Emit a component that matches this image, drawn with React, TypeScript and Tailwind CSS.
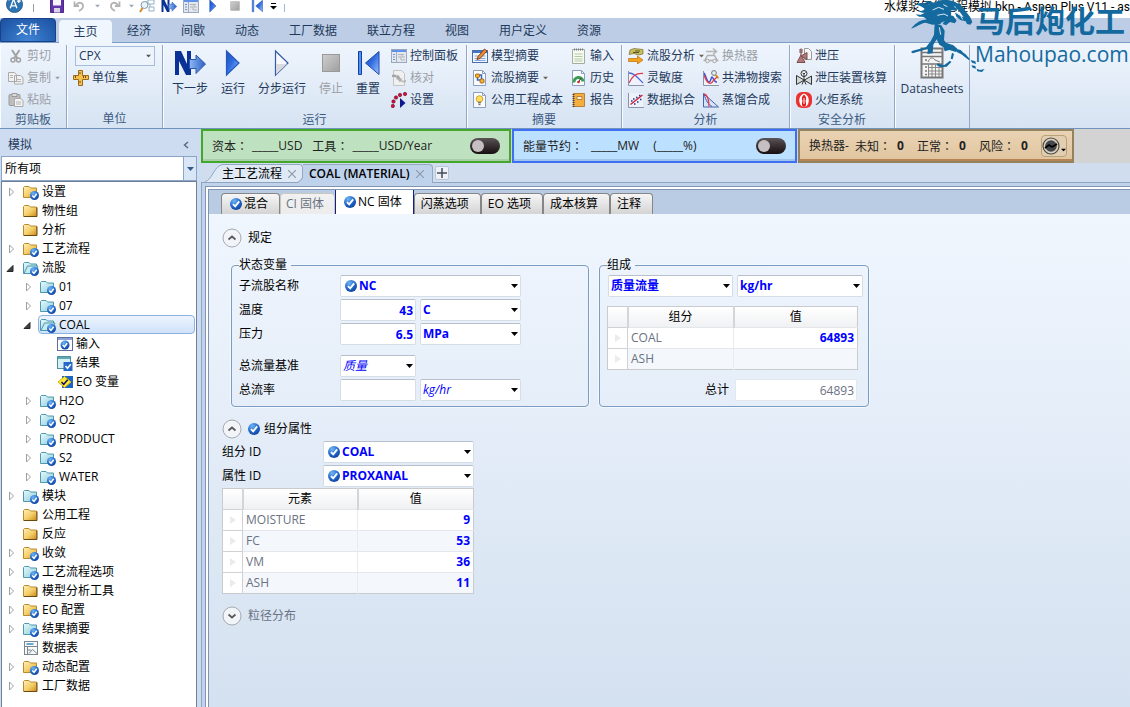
import { ReactNode, SVGProps, useState } from "react";
import { clsx } from "clsx";

type IconProps = SVGProps<SVGSVGElement>;

function Svg({ children, className = "size-4", viewBox = "0 0 16 16", ...props }: IconProps) {
  return (
    <svg viewBox={viewBox} className={clsx("shrink-0", className)} fill="none" aria-hidden="true" {...props}>
      {children}
    </svg>
  );
}

/* ---------- shared icons ---------- */

function Gradients() {
  return (
    <svg className="absolute size-0" aria-hidden="true">
      <defs>
        <linearGradient id="blue" x1="0" y1="0" x2="1" y2="1">
          <stop offset="0" stopColor="#1f52b8" />
          <stop offset="0.45" stopColor="#2f6be0" />
          <stop offset="1" stopColor="#9cc4ff" />
        </linearGradient>
        <linearGradient id="arrow" x1="0" y1="0" x2="1" y2="0">
          <stop offset="0" stopColor="#8db8f5" />
          <stop offset="1" stopColor="#2c5fc4" />
        </linearGradient>
        <linearGradient id="gold" x1="0" y1="0" x2="1" y2="1">
          <stop offset="0" stopColor="#fff0b8" />
          <stop offset="0.55" stopColor="#f4cd66" />
          <stop offset="1" stopColor="#c98a1c" />
        </linearGradient>
        <linearGradient id="teal" x1="0" y1="0" x2="1" y2="1">
          <stop offset="0" stopColor="#e4fafd" />
          <stop offset="1" stopColor="#8fcbd8" />
        </linearGradient>
        <radialGradient id="ball" cx="0.35" cy="0.25" r="0.9">
          <stop offset="0" stopColor="#6db4f5" />
          <stop offset="0.6" stopColor="#1c5fc2" />
          <stop offset="1" stopColor="#0b3a8c" />
        </radialGradient>
        <linearGradient id="gray" x1="0" y1="0" x2="1" y2="1">
          <stop offset="0" stopColor="#cfcfcf" />
          <stop offset="1" stopColor="#9f9f9f" />
        </linearGradient>
      </defs>
    </svg>
  );
}

function CheckBall({ className = "size-3" }: { className?: string }) {
  return (
    <Svg viewBox="0 0 12 12" className={className}>
      <circle cx="6" cy="6" r="6" fill="url(#ball)" />
      <path d="M3 6.2 5.2 8.4 9.2 3.4" stroke="#fff" strokeWidth="1.8" />
    </Svg>
  );
}

function Caret({ className = "" }: { className?: string }) {
  return (
    <Svg viewBox="0 0 7 4" className={clsx("h-1 w-[7px]", className)}>
      <path d="M0 0h7L3.500 4Z" fill="currentColor" />
    </Svg>
  );
}

type FolderKind = "gold" | "goldCheck" | "teal" | "tealOpen";

function Folder({ kind }: { kind: FolderKind }) {
  const gold = kind === "gold" || kind === "goldCheck";
  const stroke = gold ? "#b98b2e" : "#4f98ad";
  return (
    <Svg>
      <path d="M.5 13.500v-10l1-1H6l1.500 1.500h6v9.500Z" fill={gold ? "url(#gold)" : "url(#teal)"} stroke={stroke} />
      {kind === "gold" && <path d="M1 13.500h13V4.500" stroke="#6b4a10" />}
      {kind === "tealOpen" && <path d="M1 13.500 4.500 6H15l-3 7.500Z" fill="#c6ecf3" stroke={stroke} />}
      {kind !== "gold" && (
        <>
          <circle cx="11.500" cy="11.500" r="4.500" fill="url(#ball)" />
          <path d="m9.300 11.600 1.700 1.800 2.700-3.600" stroke="#fff" strokeWidth="1.500" />
        </>
      )}
    </Svg>
  );
}

function InputFormIcon() {
  return (
    <Svg>
      <rect x=".5" y="1.500" width="15" height="13" fill="#fff" stroke="#5a6ea0" />
      <path d="M1 2h14v2H1z" fill="#8aa0d8" />
      <circle cx="8" cy="9" r="4.500" fill="url(#ball)" />
      <path d="m5.800 9 1.700 1.800 2.700-3.600" stroke="#fff" strokeWidth="1.500" />
    </Svg>
  );
}

function ResultFormIcon() {
  return (
    <Svg>
      <rect x=".5" y="1.500" width="13" height="12" fill="#d8f0f3" stroke="#4f8f9c" />
      <path d="M1 2h12v2H1z" fill="#5fa9b5" />
      <rect x="6.500" y="7" width="9" height="9" fill="#2767c9" />
      <path d="m8.500 11 2 2.300 3.300-4" stroke="#fff" strokeWidth="1.500" />
    </Svg>
  );
}

function EoIcon() {
  return (
    <Svg>
      <rect x="5" y="2" width="11" height="12" fill="#1c63c8" />
      <path d="m1 8 6.500-5.500L14 8l-6.500 5.500Z" fill="#ffea3a" stroke="#d8b400" />
      <path d="m4.500 8 2.200 2.300 4-4.600" stroke="#101060" strokeWidth="1.500" />
    </Svg>
  );
}

function DatasheetIcon() {
  return (
    <Svg>
      <rect x="1.500" y="1.500" width="13" height="13" fill="#f7f8f8" stroke="#7b8790" />
      <path d="M3.500 4h7" stroke="#3a8fc0" strokeWidth="1.500" />
      <path d="M2 6.500h12M4.500 6.500V14M5 10h3M6 13.500l3.500-4 4.500 4" stroke="#7b8790" />
    </Svg>
  );
}

/* ---------- ribbon icons ---------- */

function NextIcon({ className = "h-8 w-8" }: { className?: string }) {
  return (
    <Svg viewBox="0 0 32 32" className={className}>
      <path d="M1 4h6l6 13V4h4v24h-5L5 14v14H1Z" fill="#0a3296" />
      <path d="M15.500 12.500H22V8l9.500 9-9.500 9.500v-5h-6.500Z" fill="url(#arrow)" stroke="#2a56ad" />
    </Svg>
  );
}

function PlayIcon({ className = "-mx-1 size-8", hollow = false }: { className?: string; hollow?: boolean }) {
  return (
    <Svg viewBox="0 0 32 32" className={className}>
      <path
        d="M9.500 4 22 16 9.500 28Z"
        fill={hollow ? "#f6f8fc" : "url(#blue)"}
        stroke={hollow ? "#3158ad" : "#2458bc"}
        strokeWidth="1.200"
      />
      {hollow && <path d="M10 17h11L10 27.500Z" fill="#d8dade" />}
    </Svg>
  );
}

function StopIcon({ className = "-mx-1 size-8" }: { className?: string }) {
  return (
    <Svg viewBox="0 0 32 32" className={className}>
      <rect x="7.500" y="7.500" width="17" height="17" fill="url(#gray)" stroke="#999" />
    </Svg>
  );
}

function RewindIcon({ className = "-mx-1 size-8" }: { className?: string }) {
  return (
    <Svg viewBox="0 0 32 32" className={className}>
      <path d="M6.500 4.500h3v23h-3Z" fill="#4d95f0" stroke="#173f9e" />
      <path d="M27 4.500v23L13.500 16Z" fill="url(#blue)" stroke="#1d49ad" />
    </Svg>
  );
}

function CutIcon() {
  return (
    <Svg>
      <path d="m4 2 5.500 8.500M11.500 2 6 10.500" stroke="#a2a2a2" strokeWidth="2" />
      <circle cx="5" cy="12" r="2" stroke="#a2a2a2" strokeWidth="1.500" />
      <circle cx="10.500" cy="12" r="2" stroke="#a2a2a2" strokeWidth="1.500" />
    </Svg>
  );
}

function CopyIcon() {
  return (
    <Svg>
      <path d="M.5 2.500h6l2 2v7h-8ZM6.500 5.500h6l2.500 2v6.500H6.500Z" fill="#f1f1f1" stroke="#aaa" />
      <path d="M2 5.500h3M2 7.500h3M8 9.500h5M8 11.500h5" stroke="#b4b4b4" />
    </Svg>
  );
}

function PasteIcon() {
  return (
    <Svg>
      <rect x="1" y="2.500" width="11" height="11" rx="1" fill="#bdbdbd" stroke="#9b9b9b" />
      <path d="M4 1.500h5v3H4Z" fill="#ddd" stroke="#999" />
      <path d="M6.500 6.500h6l2.500 2v6H6.500Z" fill="#f3f3f3" stroke="#aaa" />
      <path d="M8 10h5M8 12h5" stroke="#b4b4b4" />
    </Svg>
  );
}

function UnitSetIcon() {
  return (
    <Svg>
      <path d="M5.500.5h4v5h6v4h-6v6h-4v-6h-5v-4h5Z" fill="#f2c04c" stroke="#9c6a1c" />
      <path d="M2.500 6v2M12.500 6v2M10.500 6v2M6 3h2M6 12h2" stroke="#7b5210" />
    </Svg>
  );
}

function PanelIcon() {
  return (
    <Svg>
      <rect x=".5" y="1.500" width="15" height="13" fill="#e4e8ee" stroke="#9aa9bf" />
      <path d="M1 2h14v2H1z" fill="#5f90ea" />
      <path d="M5.500 4v10" stroke="#a4acb8" />
      <path d="M2 6.500h2M2 9h2M2 11.500h2" stroke="#6f97da" />
      <path d="M7 6.500h6M7 9h3v3h4M11 7v2h3" stroke="#b0b4bb" />
    </Svg>
  );
}

function ReconcileIcon() {
  return (
    <Svg>
      <path d="M2.500.5h8l3 3v12h-11Z" fill="#f0f0f0" stroke="#c4c4c4" />
      <path d="M1 5c3-1 4 0 5 1l1-1.500 3 4.500-5 .5L6 8C5 7 4 7 1 7Z" fill="#a6a6a6" />
      <path d="M15 12c-3 1-4 0-5-1l-1 1.500L6.500 9l5-.5-1 1.500c1 1 2 1 4.500 0Z" fill="#b4b4b4" />
    </Svg>
  );
}

function SettingsDotsIcon() {
  return (
    <Svg>
      <g fill="#d1103c" stroke="#6d0a26" strokeWidth=".6">
        <circle cx="1.800" cy="14" r="1.700" />
        <circle cx="2.500" cy="9.500" r="1.700" />
        <circle cx="5" cy="5.500" r="1.700" />
        <circle cx="9" cy="3" r="1.700" />
        <circle cx="14" cy="2" r="1.700" />
      </g>
      <path d="M9 6v10l5.500-5Z" fill="#101a8e" />
    </Svg>
  );
}

function ModelSummaryIcon() {
  return (
    <Svg>
      <rect x=".5" y="2.500" width="15" height="12" fill="#f2f7fe" stroke="#4a6fae" />
      <path d="M1 3h14v2H1z" fill="#4576c4" />
      <path d="M2.500 8h11M2.500 10.500h11M2.500 12.500h11" stroke="#8aa6d0" />
      <path d="m5 11.500 1-3L12.500 1l2.500 2-7 7.500Z" fill="#f08a2c" stroke="#83441b" />
    </Svg>
  );
}

function PageIcon({ children }: { children: ReactNode }) {
  return (
    <Svg>
      <path d="M1.500.5h9l3 3v12h-12Z" fill="#fafcff" stroke="#8b9ebb" />
      <path d="M10.500.5v3h3" stroke="#8b9ebb" />
      {children}
    </Svg>
  );
}

function StreamSummaryIcon() {
  return (
    <PageIcon>
      <path d="M5.500 5.500V10h4M7 5h2.500v5" stroke="#3565c4" strokeWidth="1.500" />
      <rect x="3.500" y="4" width="4" height="3.500" rx="1" fill="#f5b32c" stroke="#a5681a" />
      <rect x="8" y="9" width="4" height="4" rx="1" fill="#f5b32c" stroke="#a5681a" />
    </PageIcon>
  );
}

function BulbIcon() {
  return (
    <PageIcon>
      <circle cx="7.500" cy="7" r="3.300" fill="#ffdf63" stroke="#d9a520" />
      <path d="M6 10.500h3M6.500 12.500h2" stroke="#777" strokeWidth="1.500" />
    </PageIcon>
  );
}

function InputListIcon() {
  return (
    <Svg>
      <path d="M1.500 1.500h12v14h-12Z" fill="#f6f9f2" stroke="#a5ada3" />
      <path d="M3.500.5v2M5.500.5v2M7.500.5v2M9.500.5v2M11.500.5v2" stroke="#777" />
      <path d="M3.500 6h8M3.500 8.500h8M3.500 11h8M3.500 13h8" stroke="#b3cba5" />
    </Svg>
  );
}

function HistoryIcon() {
  return (
    <PageIcon>
      <path d="M3 12.500a4.500 4.500 0 0 1 9-1" stroke="#3d9c50" strokeWidth="3" />
      <path d="M7.500 12 10 8" stroke="#333" />
      <circle cx="7.500" cy="12" r="1.300" fill="#c22" />
    </PageIcon>
  );
}

function ReportIcon() {
  return (
    <Svg>
      <path d="M2.500 1.500h11v13h-11Z" fill="#f5ad3c" stroke="#b9803a" />
      <path d="M6 4.500h5v3H6Z" fill="#fff6dc" stroke="#b9803a" />
      <path d="M2.500 2v13" stroke="#444" strokeWidth="2" strokeDasharray="1 1" />
    </Svg>
  );
}

function StreamAnalysisIcon() {
  return (
    <Svg>
      <path d="M2 2 6 .5l9 1v4.500l-5 1-4-1.500-5 1Z" fill="#c6bd5e" stroke="#80702b" strokeWidth=".7" />
      <path d="M5 4.500h6M7 3h5" stroke="#5f5a20" />
      <path d="M.5 10.500h9V8l5.500 4-5.500 4v-2.500h-9Z" fill="#f5a31d" stroke="#b8700c" strokeWidth=".7" />
    </Svg>
  );
}

function ExchangerIcon() {
  return (
    <Svg>
      <path d="M3 3.500h10M10 .5l3.500 3-3.500 3" stroke="#b5b5b5" strokeWidth="1.500" />
      <path d="M.5 12.500h15M2 12 4.500 7.500h7L14 12" stroke="#b0b0b0" strokeWidth="1.500" />
      <circle cx="4.500" cy="13" r="1.800" fill="#eee" stroke="#aaa" />
      <circle cx="11.500" cy="13" r="1.800" fill="#eee" stroke="#aaa" />
    </Svg>
  );
}

function ChartIcon({ children }: { children: ReactNode }) {
  return (
    <Svg>
      <path d="M1 1h14v14H1Z" fill="#eef2fb" />
      {children}
      <path d="M.5 1v14.500H16" stroke="#8b93a8" />
    </Svg>
  );
}

function SensitivityIcon() {
  return (
    <ChartIcon>
      <path d="M1 3c5 0 8 4 14 10" stroke="#4b63d8" strokeWidth="1.300" />
      <path d="M1 13C4 7 7 3 15 3.500" stroke="#e03a4a" strokeWidth="1.300" />
    </ChartIcon>
  );
}

function DataFitIcon() {
  return (
    <ChartIcon>
      <path d="M2.500 12.500 14.500 3" stroke="#d1273c" strokeWidth="1.500" />
      <path
        d="M3 9h1.500M5 7h1.500M8 5.500h1.500M11 3.500h1.500M6 12h1.500M9 10h1.500M12 7.500h1.500"
        stroke="#20348c"
        strokeWidth="1.500"
      />
    </ChartIcon>
  );
}

function AzeotropeIcon() {
  return (
    <ChartIcon>
      <path d="M1 3c2 3 3 9 5 9s2-5 3-5 2 5 5 5" stroke="#3c55d4" strokeWidth="1.500" />
      <path d="M1 5c3 9 7 10 9 6l5-5" stroke="#e03a4a" strokeWidth="1.300" />
      <circle cx="11" cy="3" r="2.400" fill="#dff0f8" stroke="#777" />
      <path d="m12.500 5 3 3.500" stroke="#c98a1c" strokeWidth="1.500" />
    </ChartIcon>
  );
}

function DistillIcon() {
  return (
    <Svg>
      <path d="M.5 1.500v13.500H15.500Z" fill="#d4e6f5" stroke="#4b63a8" />
      <path d="M1 2c2 7 4 10 8 12.500" stroke="#3c55d4" />
      <path d="M1 2c4 1 5 7 5 12.500" stroke="#e03a4a" strokeWidth="1.300" />
    </Svg>
  );
}

function ReliefIcon() {
  return (
    <Svg>
      <path d="M8.500.5h4l3 3v8h-7Z" fill="#f7f7f7" stroke="#9a9a9a" />
      <path d="M5 7 1 14.500h8ZM5 8l6-3.500v7Z" fill="#b17a7a" stroke="#804e4e" />
      <path d="M5 7V.5M3 2h4M3 4h4" stroke="#804e4e" strokeWidth="1.200" />
    </Svg>
  );
}

function ValveIcon() {
  return (
    <Svg>
      <path d="M.5 5.500v9L15.500 6v8.500Z" fill="#d3dad6" stroke="#333" />
      <circle cx="8" cy="3.500" r="3" fill="#f5f7f5" stroke="#333" />
      <path d="M8 3.500V10M6 14.500 8 10l2 4.500M6.500 3 8 4l1.500-1.500" stroke="#333" />
    </Svg>
  );
}

function FlareIcon() {
  return (
    <Svg>
      <rect width="16" height="16" rx="6" fill="#ee3030" />
      <path d="M8 1.500c6 2 6 10 2 13H6c-4-3-4-11 2-13Z" fill="#fff" />
      <path d="M8 2.500c2 2 3 4 1.500 6.500.8 2 .8 3.500 0 5.500h-3c-.8-2-.8-3.500 0-5.500C5 6.500 6 4.500 8 2.500Z" fill="#e21f1f" />
      <path d="M8 6v6" stroke="#fff" />
    </Svg>
  );
}

function SheetsIcon() {
  return (
    <Svg viewBox="0 0 24 32" className="h-8 w-6">
      <rect x="1.500" y="1.500" width="21" height="29" fill="#f4f4f4" stroke="#777" strokeWidth="2" />
      <path d="M2 5.500h20M2 9.500h20M2 17h20M5 13h2M5 20h2M5 24h2M5 27.500h2" stroke="#777" strokeWidth="1.500" />
      <path d="M8.500 17v13M12 17v13M15.500 17v13M19 17v13M8.500 20.500H22M8.500 24H22M8.500 27H22" stroke="#8a8a8a" />
      <path d="M8 15c2-5 5-5 7-2l5 2" stroke="#777" />
    </Svg>
  );
}

/* ---------- top bars ---------- */

function QuickButton({ label, className, children }: { label: string; className?: string; children: ReactNode }) {
  return (
    <button type="button" aria-label={label} className={clsx("flex h-4 w-[22px] items-center justify-center", className)}>
      {children}
    </button>
  );
}

function QuickAccess() {
  return (
    <header className="flex h-[18px] items-start overflow-hidden bg-white">
      <button type="button" aria-label="Aspen Plus" className="-mt-1 ml-1.5">
        <Svg viewBox="0 0 18 18" className="size-[17px]">
          <circle cx="9" cy="9" r="8.500" fill="#2d73b0" stroke="#2a5f94" />
          <path d="M3 5a7 7 0 0 1 12 0" stroke="#b9dcf2" />
          <path d="m4.500 13 3-8.500h1l3 8.500M6 10.500h4M11.500 5.500h4M13.500 3.500v4" stroke="#fff" strokeWidth="1.400" />
        </Svg>
      </button>
      <span className="mt-1 ml-2.5 h-2 w-px bg-gray-400" />
      <div className="-mt-[2px] ml-3 flex text-gray-500">
        <QuickButton label="保存">
          <Svg viewBox="0 0 14 14" className="size-3.5">
            <path d="M.5.5h13v13H.5Z" fill="#6236a8" stroke="#4b2889" />
            <path d="M3 .5h8v6H3Z" fill="#f7f4fb" />
            <path d="M4 9h6v4.500H4Z" fill="#d9d2e6" />
          </Svg>
        </QuickButton>
        <QuickButton label="撤消">
          <Svg viewBox="0 0 12 12" className="size-3">
            <path d="M3 5c3-4 7-2 7 1s-2 4-4 5M1.500 1.500V6H6" stroke="#b3b3b3" strokeWidth="1.800" />
          </Svg>
        </QuickButton>
        <QuickButton label="撤消列表" className="-mx-1">
          <Caret className="scale-75 text-[#9ba4b5]" />
        </QuickButton>
        <QuickButton label="重做">
          <Svg viewBox="0 0 12 12" className="size-3">
            <path d="M9 5C6 1 2 3 2 6s2 4 4 5M10.500 1.500V6H6" stroke="#b3b3b3" strokeWidth="1.800" />
          </Svg>
        </QuickButton>
        <QuickButton label="重做列表" className="-mx-1.5">
          <Caret className="scale-75 text-[#9ba4b5]" />
        </QuickButton>
        <QuickButton label="查找">
          <Svg>
            <path d="M9 2h6v4H9ZM10 9h5v4h-5ZM5 4h4M11 6v3" stroke="#8fb0c8" />
            <circle cx="5.500" cy="7" r="3.500" fill="#e6f3fb" stroke="#8c9aa8" />
            <path d="m3.500 10-2.500 4" stroke="#d98b2c" strokeWidth="2" />
          </Svg>
        </QuickButton>
        <QuickButton label="下一步">
          <NextIcon className="size-4" />
        </QuickButton>
        <QuickButton label="控制面板">
          <PanelIcon />
        </QuickButton>
        <QuickButton label="运行">
          <PlayIcon className="size-4" />
        </QuickButton>
        <QuickButton label="停止">
          <StopIcon className="size-4" />
        </QuickButton>
        <QuickButton label="重置">
          <RewindIcon className="size-4" />
        </QuickButton>
        <QuickButton label="自定义" className="-ml-1.5">
          <Svg viewBox="0 0 7 7" className="size-[7px]">
            <path d="M1 .5h5" stroke="#000" />
            <path d="M0 3h7L3.500 6.500Z" fill="#000" />
          </Svg>
        </QuickButton>
      </div>
      <span className="mt-1 h-2 w-px bg-[#9fb6d8]" />
      <h1 className="ml-auto font-['Roboto','Noto_Sans_CJK_SC',sans-serif] text-xs leading-[14px] whitespace-nowrap text-black">
        水煤浆气化过程模拟.bkp - Aspen Plus V11 - as
      </h1>
    </header>
  );
}

const ribbonTabs = ["经济", "间歇", "动态", "工厂数据", "联立方程", "视图", "用户定义", "资源"];

function RibbonTabs() {
  return (
    <nav className="flex h-[25px] items-end border-b border-[#7d9dc5] bg-[#bccde5] text-[#1e395b]">
      <button
        type="button"
        className="mr-[3px] h-6 w-14 rounded-t border border-[#17428a] bg-radial-[at_50%_100%] from-[#3f85d6] to-[#1b4f9f] text-white"
      >
        文件
      </button>
      <button type="button" className="-mb-px h-[23px] w-[53px] rounded-t-sm bg-[#f0f6fd]">
        主页
      </button>
      {ribbonTabs.map((tab) => (
        <button key={tab} type="button" className="h-[23px] px-[15px]">
          {tab}
        </button>
      ))}
    </nav>
  );
}

function RibbonGroup({ title, className, children }: { title?: string; className: string; children: ReactNode }) {
  return (
    <section className={clsx("flex shrink-0 flex-col border-r border-[#93a8c6] shadow-[inset_1px_0_#f8fbff]", className)}>
      <div className="flex h-[66px]">{children}</div>
      {title && <h2 className="text-center leading-[18px] text-[#3b5a82]">{title}</h2>}
    </section>
  );
}

interface ToolProps {
  icon: ReactNode;
  label: string;
  disabled?: boolean;
  menu?: boolean;
}

function Tool({ icon, label, disabled, menu }: ToolProps) {
  return (
    <button
      type="button"
      disabled={disabled}
      className="flex h-[22px] items-center gap-[3px] whitespace-nowrap disabled:text-[#9b9fa6]"
    >
      {icon}
      {label}
      {menu && <Caret className={clsx("scale-75", disabled ? "text-gray-400" : "text-[#6b6255]")} />}
    </button>
  );
}

function BigTool({ icon, label, disabled }: ToolProps) {
  return (
    <button
      type="button"
      disabled={disabled}
      className="flex flex-col items-center whitespace-nowrap disabled:text-[#9b9fa6]"
    >
      {icon}
      <span className="leading-5">{label}</span>
    </button>
  );
}

function Ribbon() {
  return (
    <div className="flex h-[86px] overflow-hidden border-b border-[#7192bd] bg-linear-to-b from-[#eff5fd] to-[#d6e3f2] pt-0.5 text-[#1e395b]">
      <RibbonGroup title="剪贴板" className="w-[67px]">
        <div className="pl-2">
          <Tool icon={<CutIcon />} label="剪切" disabled />
          <Tool icon={<CopyIcon />} label="复制" disabled menu />
          <Tool icon={<PasteIcon />} label="粘贴" disabled />
        </div>
      </RibbonGroup>
      <RibbonGroup title="单位" className="w-[96px]">
        <div className="pl-1.5">
          <div className="relative ml-0.5 flex h-[22px] items-center">
            <select
              aria-label="单位集"
              className="h-5 w-20 appearance-none border border-[#a5bddb] bg-[#edf4fc] px-[3px] outline-none"
            >
              <option>CPX</option>
            </select>
            <Caret className="pointer-events-none absolute right-[3px] scale-75 text-[#4d5560]" />
          </div>
          <Tool icon={<UnitSetIcon />} label="单位集" />
        </div>
      </RibbonGroup>
      <RibbonGroup title="运行" className="w-[304px]">
        <div className="flex items-start gap-[13px] pt-0.5 pl-[9px]">
          <BigTool icon={<NextIcon />} label="下一步" />
          <BigTool icon={<PlayIcon />} label="运行" />
          <BigTool icon={<PlayIcon hollow />} label="分步运行" />
          <BigTool icon={<StopIcon />} label="停止" disabled />
          <BigTool icon={<RewindIcon />} label="重置" />
        </div>
        <div className="pl-[11px]">
          <Tool icon={<PanelIcon />} label="控制面板" />
          <Tool icon={<ReconcileIcon />} label="核对" disabled />
          <Tool icon={<SettingsDotsIcon />} label="设置" />
        </div>
      </RibbonGroup>
      <RibbonGroup title="摘要" className="w-[155px]">
        <div className="pl-[5px]">
          <Tool icon={<ModelSummaryIcon />} label="模型摘要" />
          <Tool icon={<StreamSummaryIcon />} label="流股摘要" menu />
          <Tool icon={<BulbIcon />} label="公用工程成本" />
        </div>
        <div className="pl-2">
          <Tool icon={<InputListIcon />} label="输入" />
          <Tool icon={<HistoryIcon />} label="历史" />
          <Tool icon={<ReportIcon />} label="报告" />
        </div>
      </RibbonGroup>
      <RibbonGroup title="分析" className="w-[168px]">
        <div className="w-[81px] pl-1.5">
          <Tool icon={<StreamAnalysisIcon />} label="流股分析" menu />
          <Tool icon={<SensitivityIcon />} label="灵敏度" />
          <Tool icon={<DataFitIcon />} label="数据拟合" />
        </div>
        <div>
          <Tool icon={<ExchangerIcon />} label="换热器" disabled />
          <Tool icon={<AzeotropeIcon />} label="共沸物搜索" />
          <Tool icon={<DistillIcon />} label="蒸馏合成" />
        </div>
      </RibbonGroup>
      <RibbonGroup title="安全分析" className="w-[105px]">
        <div className="pl-1.5">
          <Tool icon={<ReliefIcon />} label="泄压" />
          <Tool icon={<ValveIcon />} label="泄压装置核算" />
          <Tool icon={<FlareIcon />} label="火炬系统" />
        </div>
      </RibbonGroup>
      <RibbonGroup className="w-[75px]">
        <div className="flex flex-1 items-start justify-center pt-0.5">
          <BigTool icon={<SheetsIcon />} label="Datasheets" />
        </div>
      </RibbonGroup>
    </div>
  );
}

function Watermark() {
  return (
    <div className="pointer-events-none absolute top-0 right-0 flex text-[#146a9e]">
      <Svg viewBox="90 0 231 219" className="-mr-3 h-[73px] w-[77px]">
        <g fill="currentColor">
          {/* rider's hair and back */}
          <path d="M104 14c18-8 34-5 46 0-8-6-14-8-20-9 14-3 26 1 32 3 12-8 40-12 58-4 10 4 14 10 14 14l-14 2c10 2 12 8 10 14-6-4-12-4-18-2 4 10 0 20-6 26l-22 10h-40c-4-12-10-18-18-18-8 2-14-2-18-8 10 4 18 2 26-4-8 0-16-2-20-6 10 2 16 0 20-6-10-8-20-12-30-12Z" />
          {/* horse head */}
          <path d="M222 8c14 0 26 8 32 22l16 20 7 16-6 8-10-2-4-8-16-4-12-10-4-12 8 4 8 6 10 4-10-14-14-16-5-14Z" />
          <path d="m206 44 14 4 10 14-6 8-14-4-12 10-10-4Z" />
          {/* arm */}
          <path d="M93 86c12-14 22-24 40-27l44-1 6 14-26 2-20-6c-16 2-26 12-44 18Z" />
          {/* torso and legs */}
          <path d="m164 70 20 6 10 16-2 28 8 12-10 10-12-8-8-16-10 16-2 26-16 2 2-16-46 14-5-4 5-4 40-10 14-18 10-20Z" />
          <path d="m198 128 22 8 12 10-4 10-20-6-14 4-4-12ZM228 146l14 4 14 14-6 2-20-10Z" />
          {/* lance and hooves */}
          <path d="m246 158 10 4 14 16-4 2-18-14ZM272 180l14 4 2 8-12-4ZM274 196l12 2 2 8-10-3ZM290 206l10 4 14-3-8 9-14-2Z" />
          <path d="m172 190 20 6 18-14 4 4-14 14-18 2-12-6ZM216 158l6 4-4 16-6-2Z" />
        </g>
        <path d="m226 36 14 8 8 14M158 30l18-8 16 6M172 46l20-4 12 6M190 14l12 6M178 82l4 22" stroke="#dbe7f4" strokeWidth="3" />
      </Svg>
      <div>
        <p className="pr-[5px] text-[30px] leading-[42px] font-bold whitespace-nowrap">马后炮化工</p>
        <p className="text-[21px] leading-[24px] font-medium whitespace-nowrap">Mahoupao.com</p>
      </div>
    </div>
  );
}

/* ---------- navigation tree ---------- */

interface TreeItem {
  label: string;
  level?: number;
  arrow?: "closed" | "open";
  icon: ReactNode;
}

const teal = <Folder kind="teal" />;
const gold = <Folder kind="gold" />;
const goldCheck = <Folder kind="goldCheck" />;
const tealOpen = <Folder kind="tealOpen" />;

const treeItems: TreeItem[] = [
  { label: "设置", arrow: "closed", icon: goldCheck },
  { label: "物性组", icon: gold },
  { label: "分析", icon: gold },
  { label: "工艺流程", arrow: "closed", icon: goldCheck },
  { label: "流股", arrow: "open", icon: tealOpen },
  { label: "01", level: 1, arrow: "closed", icon: teal },
  { label: "07", level: 1, arrow: "closed", icon: teal },
  { label: "COAL", level: 1, arrow: "open", icon: tealOpen },
  { label: "输入", level: 2, icon: <InputFormIcon /> },
  { label: "结果", level: 2, icon: <ResultFormIcon /> },
  { label: "EO 变量", level: 2, icon: <EoIcon /> },
  { label: "H2O", level: 1, arrow: "closed", icon: teal },
  { label: "O2", level: 1, arrow: "closed", icon: teal },
  { label: "PRODUCT", level: 1, arrow: "closed", icon: teal },
  { label: "S2", level: 1, arrow: "closed", icon: teal },
  { label: "WATER", level: 1, arrow: "closed", icon: teal },
  { label: "模块", arrow: "closed", icon: teal },
  { label: "公用工程", icon: gold },
  { label: "反应", icon: gold },
  { label: "收敛", arrow: "closed", icon: goldCheck },
  { label: "工艺流程选项", arrow: "closed", icon: teal },
  { label: "模型分析工具", arrow: "closed", icon: gold },
  { label: "EO 配置", arrow: "closed", icon: goldCheck },
  { label: "结果摘要", arrow: "closed", icon: teal },
  { label: "数据表", icon: <DatasheetIcon /> },
  { label: "动态配置", arrow: "closed", icon: goldCheck },
  { label: "工厂数据", arrow: "closed", icon: gold },
];

function TreeArrow({ state }: { state?: "closed" | "open" }) {
  return (
    <Svg viewBox="0 0 10 10" className="mr-[5px] size-2.5">
      {state === "closed" && <path d="M3.500 1v8L7.500 5Z" fill="#fff" stroke="#a0a0a0" />}
      {state === "open" && <path d="M7 2.500v6H1Z" fill="#404040" stroke="#262626" />}
    </Svg>
  );
}

function Sidebar() {
  const [selected, setSelected] = useState("COAL");

  return (
    <aside className="flex w-[197px] shrink-0 flex-col bg-[#cddcf0]">
      <div className="flex h-[27px] items-center justify-between px-2 pt-1 text-[#1e395b]">
        <h2>模拟</h2>
        <button type="button" aria-label="折叠">
          <Svg viewBox="0 0 6 8" className="h-2 w-1.5">
            <path d="M5 1 1.500 4 5 7" stroke="#5c6b80" strokeWidth="1.500" />
          </Svg>
        </button>
      </div>
      <div className="relative ml-px flex h-[25px] items-center border border-[#8ba5c6]">
        <select aria-label="筛选" className="h-full w-full appearance-none bg-white pl-[3px] text-black outline-none">
          <option>所有项</option>
        </select>
        <span className="pointer-events-none absolute inset-y-0 right-0 flex w-[13px] items-center justify-center border-l border-[#8ba5c6] bg-[#d9e6f6]">
          <Caret className="text-[#35598c]" />
        </span>
      </div>
      <ul className="ml-px flex-1 border border-b-0 border-[#6f8098] bg-white text-black">
        {treeItems.map(({ label, level = 0, arrow, icon }) => (
          <li key={label} className={clsx("flex h-[19px]", level === 0 && "pl-1", level === 1 && "pl-[21px]", level === 2 && "pl-[38px]")}>
            <button type="button" onClick={() => setSelected(label)} className="flex flex-1 items-center pr-px">
              <TreeArrow state={arrow} />
              <span
                className={clsx(
                  "flex h-[19px] flex-1 items-center gap-[3px] rounded-sm border pl-px",
                  selected === label ? "border-[#8cb3e0] bg-linear-to-b from-[#edf4fd] to-[#cfe2fb]" : "border-transparent",
                )}
              >
                {icon}
                {label}
              </span>
            </button>
          </li>
        ))}
      </ul>
    </aside>
  );
}

/* ---------- dashboard ---------- */

function Toggle({ label }: { label: string }) {
  return (
    <input
      type="checkbox"
      role="switch"
      aria-label={label}
      className="ml-auto flex h-4 w-[30px] appearance-none items-center rounded-full bg-linear-to-b from-[#5b5558] to-[#170f12] pl-0.5 before:size-3 before:rounded-full before:bg-[#c5bfc2] checked:justify-end checked:pr-0.5"
    />
  );
}

// The TC face centres the full-width colon in its cell.
function Caption({ children, className }: { children: string; className?: string }) {
  return (
    <span className={className}>
      {children}
      <span lang="zh-TW" className="font-['Noto_Sans_CJK_TC',sans-serif]">：</span>
    </span>
  );
}

function Dashboard() {
  return (
    <div className="flex h-[34px] shrink-0 bg-[#d3d3d3] whitespace-nowrap text-[#222]">
      <div className="flex w-[310px] shrink-0 items-center border-2 border-[#43a82a] bg-[#bee2bf] pr-[9px] pl-[9px] shadow-[inset_0_-2px_#a9cfaa]">
        <Caption>资本</Caption>
        <span className="ml-1">_____USD</span>
        <Caption className="ml-2.5">工具</Caption>
        <span className="ml-1">_____USD/Year</span>
        <Toggle label="经济" />
      </div>
      <div className="ml-px flex w-[285px] shrink-0 items-center border-2 border-[#3e6ff3] bg-[#bce0ff] pr-[9px] pl-[9px] shadow-[inset_0_-2px_#a3c4ea]">
        <Caption>能量节约</Caption>
        <span className="ml-2">_____MW</span>
        <span className="ml-3.5">(_____%)</span>
        <Toggle label="能量" />
      </div>
      <div className="ml-px flex w-[276px] shrink-0 items-center border-2 border-[#94835d] bg-linear-to-b from-[#ead3b4] to-[#e0c59e] pl-[9px] shadow-[inset_0_-2px_#b58452]">
        <span>换热器-</span>
        <Caption className="ml-1.5">未知</Caption>
        <b className="ml-1.5 w-4">0</b>
        <Caption className="ml-1">正常</Caption>
        <b className="ml-1.5 w-4">0</b>
        <Caption className="ml-1">风险</Caption>
        <b className="ml-1.5 w-4">0</b>
        <button
          type="button"
          aria-label="换热器"
          className="ml-1 flex h-[22px] w-[26px] items-center rounded-sm border border-[#b8a07c] bg-[#e2cfb2] text-black"
        >
          <Svg viewBox="0 0 18 18" className="size-[18px]">
            <circle cx="9" cy="9" r="8" fill="#d9d0bd" stroke="#4b4b46" strokeWidth="1.200" />
            <circle cx="9" cy="9" r="5.800" fill="#45484c" />
            <path d="m3 11 4-3 3 2 5-3" stroke="#000" strokeWidth="1.800" />
          </Svg>
          <Caret className="mt-2 scale-75" />
        </button>
      </div>
    </div>
  );
}

/* ---------- document tabs ---------- */

function DocumentTab({ label, active }: { label: string; active?: boolean }) {
  const fill = active ? "#bfd2ec" : "#dfe9f6";
  return (
    <div className={clsx("flex", active ? "relative z-10 -mb-px -ml-1.5 h-[19px] font-semibold" : "h-[18px]")}>
      <Svg viewBox="0 0 18 18" preserveAspectRatio="none" className="h-full w-[18px]">
        <path d="M0 18C7 17 9 1 18 .5V18Z" fill={fill} />
        <path d="M0 17.500C7 17 9 1 18 .5" stroke="#95a8c2" />
      </Svg>
      <div
        className={clsx(
          "flex items-center rounded-tr-sm border-t border-r border-[#95a8c2]",
          active ? "-ml-3 bg-[#bfd2ec] pr-2" : "-ml-px bg-[#dfe9f6] pr-1.5",
        )}
      >
        <button type="button" className={clsx("whitespace-nowrap", active && "pl-1.5")}>
          {label}
        </button>
        <button type="button" aria-label={`关闭 ${label}`} className="ml-1.5">
          <Svg viewBox="0 0 8 8" className="size-2">
            <path d="m0 0 8 8M8 0 0 8" stroke="#8f99a8" strokeWidth="1.200" />
          </Svg>
        </button>
      </div>
    </div>
  );
}

interface FormTab {
  label: string;
  checked?: boolean;
  disabled?: boolean;
}

const formTabs: FormTab[] = [
  { label: "混合", checked: true },
  { label: "CI 固体", disabled: true },
  { label: "NC 固体", checked: true },
  { label: "闪蒸选项" },
  { label: "EO 选项" },
  { label: "成本核算" },
  { label: "注释" },
];

function FormTabs() {
  const [current, setCurrent] = useState("NC 固体");

  return (
    <div className="flex h-6 items-end bg-[#bacce4] pl-3">
      {formTabs.map(({ label, checked, disabled }) => (
        <button
          key={label}
          type="button"
          disabled={disabled}
          onClick={() => setCurrent(label)}
          className={clsx(
            "flex items-center gap-0.5 whitespace-nowrap",
            current === label
              ? "h-6 border-x border-[#10208c] bg-white"
              : "h-[21px] rounded-t-sm border border-b-0 border-[#868686] bg-linear-to-b from-[#f6f6f6] to-[#d4d4d4] disabled:border-[#c8c8c0] disabled:from-[#f1f1f1] disabled:to-[#ececec] disabled:text-gray-500",
            checked ? "pr-[11px] pl-2" : disabled ? "pr-2.5 pl-[5px]" : "pr-[11px] pl-1.5",
          )}
        >
          {checked && <CheckBall />}
          {label}
        </button>
      ))}
    </div>
  );
}

/* ---------- form ---------- */

interface SelectProps {
  id: string;
  value: string;
  label?: string;
  className?: string;
  checked?: boolean;
  italic?: boolean;
}

function Select({ id, value, label, className, checked, italic }: SelectProps) {
  return (
    <div className={clsx("relative flex h-[22px] items-center", className)}>
      {checked && <CheckBall className="pointer-events-none absolute left-[5px] size-3" />}
      <select
        id={id}
        aria-label={label}
        className={clsx(
          "h-full w-full appearance-none rounded-xs border border-[#d5dde7] border-t-[#b7c0cc] bg-white text-[#00f] outline-none",
          checked ? "pl-[18px]" : "pl-0.5",
          italic ? "italic" : "font-bold",
        )}
      >
        <option>{value}</option>
      </select>
      <Caret className="pointer-events-none absolute right-[3px] text-black" />
    </div>
  );
}

function NumberInput({ id, value }: { id: string; value: string }) {
  return (
    <input
      id={id}
      defaultValue={value}
      className="h-[22px] w-full rounded-xs border border-[#d5dde7] border-t-[#b7c0cc] bg-white pr-0.5 text-right font-bold text-[#00f] outline-none"
    />
  );
}

function Expander({ title, open = true, checked }: { title: string; open?: boolean; checked?: boolean }) {
  return (
    <button type="button" aria-expanded={open} className={clsx("flex h-5 items-center", !open && "text-gray-500")}>
      <Svg viewBox="0 0 20 20" className="mr-1.5 size-5">
        <circle cx="10" cy="10" r="9" fill="#f1f5fa" stroke="#a7a9ad" />
        <path d={open ? "m6.500 11.500 3.500-3 3.500 3" : "m6.500 8.500 3.500 3 3.500-3"} stroke="#5a5a5a" strokeWidth="1.800" />
      </Svg>
      {checked && <CheckBall className="mr-1 size-3" />}
      {title}
    </button>
  );
}

interface GridProps {
  columns: string[];
  rows: string[][];
  nameWidth: string;
  valueWidth: string;
}

function DataGrid({ columns, rows, nameWidth, valueWidth }: GridProps) {
  return (
    <table className="border-collapse border border-[#c9cbce] bg-white text-gray-500">
      <thead>
        <tr className="h-[21px] bg-linear-to-b from-white to-[#eff0f2] text-black">
          <th className="w-5 border-r-2 border-[#d4d5d8] p-0" />
          <th className={clsx("border-r-2 border-[#d4d5d8] p-0 font-normal", nameWidth)}>{columns[0]}</th>
          <th className={clsx("p-0 font-normal", valueWidth)}>{columns[1]}</th>
        </tr>
      </thead>
      <tbody>
        {rows.map(([name, value]) => (
          <tr key={name} className="h-[21px] border-t border-[#e4e6e9] even:bg-[#f4f8fd]">
            <td className="border-t border-r border-[#cfd1d4] bg-white p-0">
              <Svg viewBox="0 0 6 8" className="mx-auto h-2 w-1.5">
                <path d="M0 0v8l6-4Z" fill="#e9ebee" />
              </Svg>
            </td>
            <td className="border-r border-[#e9ebee] p-0 pl-[3px]">{name}</td>
            <td className="p-0 pr-[3px] text-right font-bold text-[#00f]">{value}</td>
          </tr>
        ))}
      </tbody>
    </table>
  );
}

const fieldset = "rounded border border-[#7c9dc2] px-[5px] pt-0.5 pb-[5px] shadow-[0_0_0_1px_#f4f9ff]";

function StateVariables() {
  return (
    <fieldset className={clsx(fieldset, "w-[358px]")}>
      <legend className="ml-0.5 pr-1 leading-4">状态变量</legend>
      <div className="grid grid-cols-[97px_76px_101px] gap-x-1 gap-y-0.5 pl-0.5 *:[label]:leading-[22px]">
        <label htmlFor="substream">子流股名称</label>
        <Select id="substream" value="NC" checked className="col-span-2" />
        <label htmlFor="temperature">温度</label>
        <NumberInput id="temperature" value="43" />
        <Select id="temperature-unit" label="温度单位" value="C" />
        <label htmlFor="pressure">压力</label>
        <NumberInput id="pressure" value="6.5" />
        <Select id="pressure-unit" label="压力单位" value="MPa" />
        <label htmlFor="basis" className="mt-2">总流量基准</label>
        <Select id="basis" value="质量" italic className="mt-2" />
        <span />
        <label htmlFor="flow">总流率</label>
        <NumberInput id="flow" value="" />
        <Select id="flow-unit" label="流率单位" value="kg/hr" italic />
      </div>
    </fieldset>
  );
}

function Composition() {
  return (
    <fieldset className={clsx(fieldset, "w-[270px]")}>
      <legend className="ml-0.5 pr-1 leading-4">组成</legend>
      <div className="flex gap-1 pl-[3px]">
        <Select id="composition-basis" label="组成基准" value="质量流量" className="w-[125px]" />
        <Select id="composition-unit" label="组成单位" value="kg/hr" className="w-[126px]" />
      </div>
      <div className="mt-[9px] ml-0.5">
        <DataGrid
          columns={["组分", "值"]}
          rows={[
            ["COAL", "64893"],
            ["ASH", ""],
          ]}
          nameWidth="w-[106px]"
          valueWidth="w-[124px]"
        />
      </div>
      <div className="mt-[9px] mr-1.5 flex items-center justify-end gap-1.5">
        <label htmlFor="total">总计</label>
        <input
          id="total"
          readOnly
          value="64893"
          className="h-[22px] w-[122px] border border-[#e3e8ee] bg-white pr-0.5 text-right text-gray-500 outline-none"
        />
      </div>
    </fieldset>
  );
}

function MaterialForm() {
  return (
    <form className="flex-1 bg-linear-to-b from-[#f0f6fe] to-[#d4e1f0] pt-3.5 pl-[13px]">
      <Expander title="规定" />
      <div className="mt-[9px] flex items-start gap-2.5 pl-[9px]">
        <StateVariables />
        <Composition />
      </div>
      <div className="mt-3">
        <Expander title="组分属性" checked />
      </div>
      <div className="mt-0.5 mb-px grid w-[252px] grid-cols-[101px_151px] gap-y-0.5 *:[label]:leading-[22px]">
        <label htmlFor="component">组分 ID</label>
        <Select id="component" value="COAL" checked />
        <label htmlFor="attribute">属性 ID</label>
        <Select id="attribute" value="PROXANAL" checked />
      </div>
      <DataGrid
        columns={["元素", "值"]}
        rows={[
          ["MOISTURE", "9"],
          ["FC", "53"],
          ["VM", "36"],
          ["ASH", "11"],
        ]}
        nameWidth="w-[115px]"
        valueWidth="w-[116px]"
      />
      <div className="mt-3">
        <Expander title="粒径分布" open={false} />
      </div>
    </form>
  );
}

function Workspace() {
  return (
    <main className="flex min-w-0 flex-1 flex-col overflow-hidden bg-[#d0ddee]">
      <Dashboard />
      <div className="flex h-5 shrink-0 items-end border-b border-[#8fa4bf] pl-1">
        <DocumentTab label="主工艺流程" />
        <DocumentTab label="COAL (MATERIAL)" active />
        <button type="button" aria-label="新建" className="mb-0.5 ml-0.5 rounded-xs border border-[#b9c6d8] bg-[#eef2f8]">
          <Svg viewBox="0 0 12 12" className="size-3">
            <path d="M6 1v10M1 6h10" stroke="#444c58" strokeWidth="1.500" />
          </Svg>
        </button>
      </div>
      <div className="flex flex-1 flex-col border-l border-[#8fa4bf] bg-[#bfd4ec] pt-[3px] pl-[3px]">
        <div className="flex flex-1 flex-col border-t border-l border-[#8395ae] bg-white pt-0.5 pl-0.5">
          <div className="flex flex-1 flex-col border-t border-l border-[#8395ae]">
            <FormTabs />
            <MaterialForm />
          </div>
        </div>
      </div>
    </main>
  );
}

export default function App() {
  return (
    <div className="relative flex min-h-screen flex-col overflow-hidden bg-[#cddcf0] font-['Open_Sans','Noto_Sans_CJK_SC',sans-serif] text-xs text-black">
      <Gradients />
      <QuickAccess />
      <RibbonTabs />
      <Ribbon />
      <div className="flex flex-1 gap-1">
        <Sidebar />
        <Workspace />
      </div>
      <Watermark />
    </div>
  );
}
